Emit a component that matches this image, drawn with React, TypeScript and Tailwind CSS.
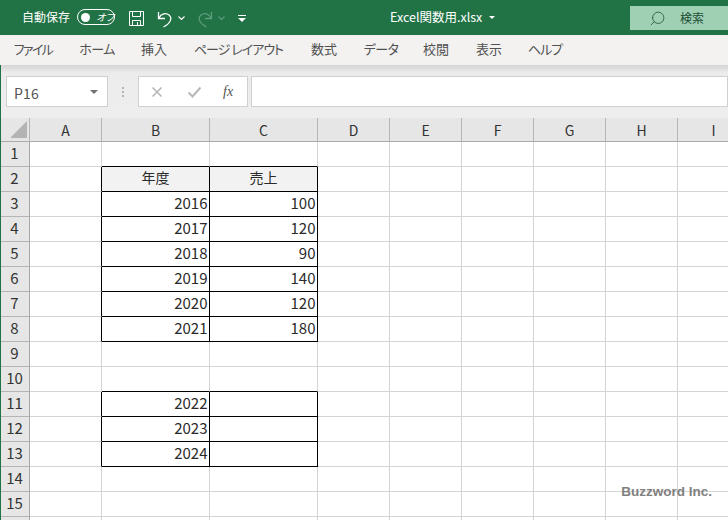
import React from 'react';
import { Search } from 'lucide-react';

const font = 'font-["Noto_Sans_CJK_JP","Noto_Sans",sans-serif]';
const colWidths = [72, 108, 108, 72, 72, 72, 72, 72, 72];
const colNames = ['A', 'B', 'C', 'D', 'E', 'F', 'G', 'H', 'I'];
const tabs = [
    { label: 'ファイル', w: 'w-[66px] tracking-[-1.6px]' },
    { label: 'ホーム', w: 'w-[62px] tracking-[-0.5px]' },
    { label: '挿入', w: 'w-[52px]' },
    { label: 'ページ レイアウト', w: 'w-[117px] tracking-[-1px]' },
    { label: '数式', w: 'w-[54px]' },
    { label: 'データ', w: 'w-[60px] tracking-[-0.6px]' },
    { label: '校閲', w: 'w-[50px]' },
    { label: '表示', w: 'w-[56px]' },
    { label: 'ヘルプ', w: 'w-[56px] tracking-[-1px]' },
];

// row number -> [B, C, header?]
const cells: Record<number, [string, string, boolean?]> = {
    2: ['年度', '売上', true],
    3: ['2016', '100'],
    4: ['2017', '120'],
    5: ['2018', '90'],
    6: ['2019', '140'],
    7: ['2020', '120'],
    8: ['2021', '180'],
    11: ['2022', ''],
    12: ['2023', ''],
    13: ['2024', ''],
};

function SaveIcon() {
    return (
        <svg width="17" height="17" viewBox="0 0 17 17" fill="none" stroke="#fff" strokeWidth="1">
            <path d="M1.5 1.5h14v14h-14z" />
            <path d="M4.5 1.5v5h8v-5M4.5 15.5v-5h8v5M9.5 12v3" />
        </svg>
    );
}

function UndoIcon({ muted }: { muted?: boolean }) {
    return (
        <svg
            width="16"
            height="18"
            viewBox="0 0 16 18"
            fill="none"
            stroke={muted ? '#5d9c7c' : '#fff'}
            strokeWidth="1.3"
            className={muted ? '-scale-x-100' : ''}
        >
            <path d="M1.5 2v6.5h6.5" />
            <path d="M2 8C4 3.5 9 2.5 12 5c3.5 3 2 8-5.5 12" />
        </svg>
    );
}

function Caret({ color = '#fff' }: { color?: string }) {
    return (
        <svg width="7" height="4" viewBox="0 0 7 4" fill="none" stroke={color} strokeWidth="1.1">
            <path d="M.5.5l3 3 3-3" />
        </svg>
    );
}

function TitleBar() {
    return (
        <div className="flex h-[35px] items-start bg-[#217346] text-white">
            <span className="mt-[8px] ml-[22px] text-[12px] leading-[18px]">自動保存</span>
            <div className="mt-[9px] ml-[7px] flex h-[16px] w-[38px] items-center rounded-full border border-white pl-[3px]">
                <span className="h-[9px] w-[9px] rounded-full bg-white" />
                <span className="ml-[6px] text-[10px] leading-none tracking-[-1px] italic">オフ</span>
            </div>
            <div className="mt-[10px] ml-[13px]">
                <SaveIcon />
            </div>
            <div className="mt-[10px] ml-[12px]">
                <UndoIcon />
            </div>
            <div className="mt-[16px] ml-[5px]">
                <Caret />
            </div>
            <div className="mt-[10px] ml-[12px]">
                <UndoIcon muted />
            </div>
            <div className="mt-[16px] ml-[5px]">
                <Caret color="#5d9c7c" />
            </div>
            <div className="mt-[15px] ml-[13px] flex flex-col items-center gap-[2px]">
                <span className="h-px w-[8px] bg-white" />
                <span className="h-0 w-0 border-x-[4px] border-t-[4px] border-x-transparent border-t-white" />
            </div>
            <div className="mt-[8px] ml-[144px] flex items-center gap-[7px]">
                <span className="text-[12.5px] leading-[18px]">Excel関数用.xlsx</span>
                <span className="h-0 w-0 border-x-[3px] border-t-[3px] border-x-transparent border-t-white" />
            </div>
            <div className="mt-[6px] ml-auto flex h-[24px] w-[98px] items-center bg-[#a0d0b4] pl-[19px] text-[#1c4f34]">
                <Search size={17} strokeWidth={1.1} className="-scale-x-100" />
                <span className="ml-[14px] text-[12px] leading-none">検索</span>
            </div>
        </div>
    );
}

function RibbonTabs() {
    return (
        <div className="flex h-[30px] items-center bg-[#f3f2f1] pb-[2px] text-[13px] text-[#505050] [font-feature-settings:'palt']">
            {tabs.map(tab => (
                <span key={tab.label} className={`${tab.w} shrink-0 text-center`}>
                    {tab.label}
                </span>
            ))}
        </div>
    );
}

function FormulaBar() {
    return (
        <div className="flex h-[53px] bg-[#e9e9e9] bg-gradient-to-b from-[#d5d5d5] via-[#ececec] via-15% to-[#eeeeee] pt-[11px] pl-[6px]">
            <div className="flex h-[31px] w-[102px] items-center justify-between border border-[#d0d0d0] bg-white pr-[9px] pl-[7px]">
                <span className="pt-[3px] text-[14px] tracking-[0.2px] text-[#555555]">P16</span>
                <span className="h-0 w-0 border-x-[4px] border-t-[4px] border-x-transparent border-t-[#707070]" />
            </div>
            <div className="flex h-[31px] w-[30px] flex-col items-center justify-center gap-[2px]">
                <span className="h-[2px] w-[2px] bg-[#b5b5b5]" />
                <span className="h-[2px] w-[2px] bg-[#b5b5b5]" />
                <span className="h-[2px] w-[2px] bg-[#b5b5b5]" />
            </div>
            <div className="flex h-[31px] w-[110px] items-center border border-[#d0d0d0] bg-white">
                <svg width="12" height="12" viewBox="0 0 12 12" className="ml-[12px]" stroke="#b8b8b8" strokeWidth="1.6">
                    <path d="M1.5 1.5l9 9M10.5 1.5l-9 9" />
                </svg>
                <svg width="15" height="12" viewBox="0 0 15 12" fill="none" className="ml-[24px]" stroke="#b8b8b8" strokeWidth="2">
                    <path d="M1.5 6.5l4 4 8-9" />
                </svg>
                <span className="ml-[21px] font-['Liberation_Serif',serif] text-[14px] leading-none text-[#555555] italic">
                    fx
                </span>
            </div>
            <div className="ml-[3px] h-[31px] flex-1 border border-[#d0d0d0] bg-white" />
        </div>
    );
}

function ColumnHeader() {
    return (
        <div className="flex h-[24px] border-b border-[#ababab] bg-[#e6e6e6]">
            <div className="relative w-[30px] shrink-0 border-r border-[#b5b5b5]">
                <span className="absolute right-[2px] bottom-[3px] h-0 w-0 border-b-[17px] border-l-[17px] border-b-[#b4b4b4] border-l-transparent" />
            </div>
            {colWidths.map((w, i) => (
                <div
                    key={colNames[i]}
                    style={{ width: w }}
                    className="flex shrink-0 items-center justify-center border-r border-[#b5b5b5] text-[14px] leading-none text-[#333333]"
                >
                    {colNames[i]}
                </div>
            ))}
        </div>
    );
}

function isBoxed(row: number) {
    return row in cells;
}

function SheetRow({ row }: { row: number }) {
    const data = cells[row];
    const boxed = isBoxed(row);
    const boxedBelow = isBoxed(row + 1);
    const bottomB = boxed || boxedBelow ? 'border-b-black' : 'border-b-[#d4d4d4]';
    return (
        <div className="flex h-[25px]">
            <div className="flex w-[30px] shrink-0 items-center justify-center border-r border-b border-r-[#a8a8a8] border-b-[#b5b5b5] bg-[#e6e6e6] pb-[4px] text-[15px] leading-none text-[#333333]">
                {row < 16 ? row : ''}
            </div>
            {colWidths.map((w, i) => {
                const inTable = i === 1 || i === 2;
                const rightBlack = boxed && i <= 2;
                const bottom = inTable ? bottomB : 'border-b-[#d4d4d4]';
                const right = rightBlack ? 'border-r-black' : 'border-r-[#d4d4d4]';
                const header = data?.[2];
                let bg = 'bg-white';
                if (inTable && header) bg = 'bg-[#f2f2f2]';
                const text = inTable && data ? data[i - 1] : '';
                return (
                    <div
                        key={i}
                        style={{ width: w }}
                        className={`flex shrink-0 items-center border-r border-b pb-[4px] leading-none text-[#2a2a2a] ${bottom} ${right} ${bg} ${
                            header ? 'justify-center text-[14px]' : 'justify-end pr-[1.5px] text-[15px]'
                        }`}
                    >
                        {text}
                    </div>
                );
            })}
        </div>
    );
}

export default function App() {
    const rows = Array.from({ length: 16 }, (_, i) => i + 1);
    return (
        <div className={`${font} relative h-[520px] w-[728px] overflow-hidden bg-white`}>
            <TitleBar />
            <RibbonTabs />
            <FormulaBar />
            <ColumnHeader />
            {rows.map(row => (
                <SheetRow key={row} row={row} />
            ))}
            <span className="absolute top-[65px] bottom-0 left-0 w-px bg-[#217346]" />
            <span className="absolute right-[16px] bottom-[22px] font-['Liberation_Sans',sans-serif] text-[13.5px] leading-none font-bold text-[#808080]">
                Buzzword Inc.
            </span>
        </div>
    );
}
